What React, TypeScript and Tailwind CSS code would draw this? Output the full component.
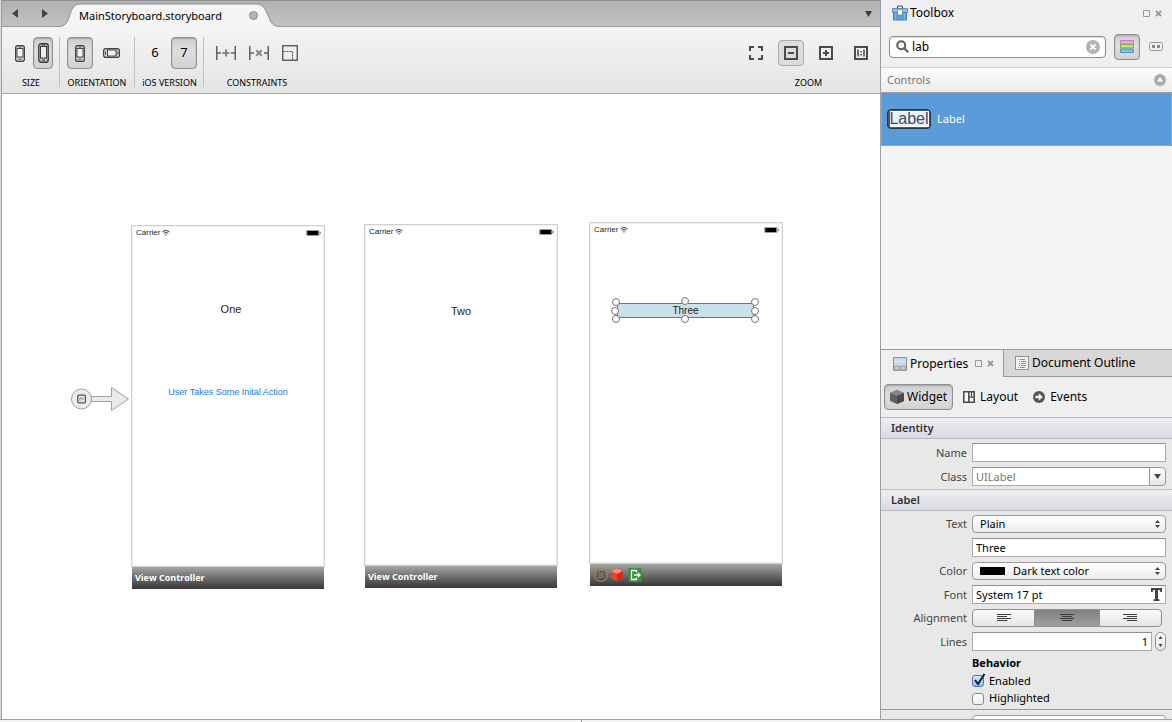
import React from "react";
import type { ReactNode } from "react";

const BTN_ON = "rounded border border-[#8f8f8f] bg-linear-to-b from-[#cfcfcf] via-[#dedede] to-[#d2d2d2] shadow-[inset_0_1px_2px_#0003]";
const FIELD = "h-[19px] min-w-0 flex-1 border border-[#ababab] border-t-[#8e8e8e] bg-white px-[3px] text-black outline-none";
const POPUP = "h-[18px] w-full appearance-none rounded border border-[#9a9a9a] bg-linear-to-b from-white to-[#ececec] text-black outline-none";

function Phone() {
  return (
    <svg width="10" height="17" viewBox="0 0 10 17" fill="none" stroke="#444">
      <rect x=".6" y=".6" width="8.800" height="15.800" rx="2.200" strokeWidth="1.200" fill="#cfcfcf" />
      <rect x="2" y="3.500" width="6" height="8.500" fill="#f4f4f4" />
      <path d="M3.500 2h3M3.500 14.300h3" strokeWidth=".9" />
    </svg>
  );
}

function TallPhone() {
  return (
    <svg width="11" height="20" viewBox="0 0 11 20" fill="none" stroke="#3a3a3a">
      <rect x=".75" y=".75" width="9.500" height="18.500" rx="2.200" strokeWidth="1.300" fill="#b8b8b8" />
      <rect x="2.500" y="3.500" width="6" height="11.500" fill="#eee" />
      <path d="M4 2h3M4.200 17.200h2.600" />
    </svg>
  );
}

function WidePhone() {
  return (
    <svg width="17" height="10" viewBox="0 0 17 10" fill="none" stroke="#444">
      <rect x=".6" y=".6" width="15.800" height="8.800" rx="2.200" strokeWidth="1.200" fill="#cfcfcf" />
      <rect x="4.500" y="2" width="8.500" height="6" fill="#f4f4f4" />
      <path d="M2.500 3.500v3M14.800 3.500v3" strokeWidth=".9" />
    </svg>
  );
}

function Group({ label, children, className = "" }: { label: string; children: ReactNode; className?: string }) {
  return (
    <div className={`flex flex-col items-center ${className}`}>
      <div className="flex h-8 w-full items-center justify-between">{children}</div>
      <span className="mt-2 text-[9px] leading-3 whitespace-nowrap text-black">{label}</span>
    </div>
  );
}

const Divider = () => <div className="h-[50px] w-px shrink-0 bg-[#c2c2c2]" />;

function Toolbar() {
  return (
    <div className="flex h-[67px] shrink-0 items-start border-b border-[#a3a3a3] bg-linear-to-b from-[#f4f4f4] to-[#e4e4e4] pt-[10px]">
      <Group label="SIZE" className="mr-[6px] ml-[7px] w-11">
        <button aria-label="3.5 inch" className="ml-[6px]"><Phone /></button>
        <button aria-label="4 inch" className={`flex h-8 w-5 items-center justify-center ${BTN_ON}`}><TallPhone /></button>
      </Group>
      <Divider />
      <Group label="ORIENTATION" className="mr-[7px] ml-[7px] w-[60px]">
        <button aria-label="Portrait" className={`flex h-8 w-[26px] items-center justify-center ${BTN_ON}`}><Phone /></button>
        <button aria-label="Landscape" className="mr-[7px]"><WidePhone /></button>
      </Group>
      <Divider />
      <Group label="iOS VERSION" className="mr-[6px] ml-[7px] w-[55px]">
        <button className="w-[26px] text-[13px] text-black">6</button>
        <button className={`h-8 w-[26px] text-[13px] text-black ${BTN_ON}`}>7</button>
      </Group>
      <Divider />
      <Group label="CONSTRAINTS" className="ml-3 w-[82px]">
        <button aria-label="Add constraints">
          <svg width="20" height="14" viewBox="0 0 20 14" fill="none" strokeWidth="1.500" stroke="#606060">
            <path d="M.75 0v14M19.250 0v14M1 7h4M15 7h4" />
            <path d="M6.500 7h7M10 3.500v7" stroke="#858585" strokeWidth="2" />
          </svg>
        </button>
        <button aria-label="Remove constraints">
          <svg width="20" height="14" viewBox="0 0 20 14" fill="none" strokeWidth="1.500" stroke="#606060">
            <path d="M.75 0v14M19.250 0v14M1 7h4M15 7h4" />
            <path d="M7.200 4.200l5.600 5.600M12.800 4.200L7.200 9.800" stroke="#858585" strokeWidth="2" />
          </svg>
        </button>
        <button aria-label="Frame mode">
          <svg width="16" height="16" viewBox="0 0 16 16" fill="none" stroke="#505050">
            <rect x=".75" y=".75" width="14.500" height="14.500" strokeWidth="1.300" />
            <path d="M1.500 6.500h9V15" strokeDasharray="2 1" strokeWidth="1.100" />
          </svg>
        </button>
      </Group>
      <Group label="ZOOM" className="mr-3 ml-auto w-[119px]">
        <button aria-label="Fit">
          <svg width="14" height="14" viewBox="0 0 14 14" fill="none" stroke="#4a4a4a" strokeWidth="2">
            <path d="M1 5V1h4M9 1h4v4M13 9v4H9M5 13H1V9" />
          </svg>
        </button>
        <button aria-label="Zoom out" className="-mr-[6px] -ml-[6px] flex h-[26px] w-[26px] items-center justify-center rounded-sm border border-[#aaa] bg-[#dcdcdc]">
          <svg width="14" height="14" viewBox="0 0 14 14" fill="none" stroke="#4a4a4a" strokeWidth="2">
            <path d="M1 1h12v12H1zM4 7h6" />
          </svg>
        </button>
        <button aria-label="Zoom in">
          <svg width="14" height="14" viewBox="0 0 14 14" fill="none" stroke="#4a4a4a" strokeWidth="2">
            <path d="M1 1h12v12H1zM4 7h6M7 4v6" />
          </svg>
        </button>
        <button aria-label="Actual size">
          <svg width="14" height="14" viewBox="0 0 14 14" fill="none" stroke="#4a4a4a" strokeWidth="2">
            <path d="M1 1h12v12H1z" />
            <path d="M4 3.500v7M10 3.500v7M7 5v1.500M7 8v1.500" strokeWidth="1.500" />
          </svg>
        </button>
      </Group>
    </div>
  );
}

function TabStrip() {
  return (
    <div className="flex h-[27px] shrink-0 items-stretch border-t border-b border-t-[#8f8f8f] border-b-[#999] bg-linear-to-b from-[#b2b2b2] to-[#c1c1c1]">
      <div className="flex w-[56px] items-center justify-between pr-[10px] pl-[10px]">
        <button aria-label="Back"><svg width="6" height="9" viewBox="0 0 6 9"><path d="M6 0v9L0 4.500z" fill="#444" /></svg></button>
        <button aria-label="Forward"><svg width="6" height="9" viewBox="0 0 6 9"><path d="M0 0v9l6-4.500z" fill="#444" /></svg></button>
      </div>
      <div className="relative -mb-px flex w-[222px] items-center">
        <svg className="absolute inset-0 h-full w-full" viewBox="0 0 222 26" preserveAspectRatio="none">
          <path d="M0 25.500C7 25.500 9 22 11 16.500C13 10 15 3 22 3H199C206 3 208 10 211 16.500C213 22 215 25.500 222 25.500V26H0Z" fill="#f5f5f5" />
          <path d="M0 25.500C7 25.500 9 22 11 16.500C13 10 15 3 22 3H199C206 3 208 10 211 16.500C213 22 215 25.500 222 25.500" fill="none" stroke="#8a8a8a" />
        </svg>
        <span className="relative mt-[3px] ml-[21px] text-[11px] leading-4 text-black">MainStoryboard.storyboard</span>
        <span className="absolute top-[10px] right-[22px] h-[9px] w-[9px] rounded-full border border-[#8a8a8a] bg-[#b4b4b4]" />
      </div>
      <button aria-label="Open documents" className="mr-2 ml-auto"><svg width="7" height="6" viewBox="0 0 7 6"><path d="M0 0h7L3.500 6z" fill="#3a3a3a" /></svg></button>
    </div>
  );
}

function Screen({ className, footer, children }: { className: string; footer: ReactNode; children: ReactNode }) {
  return (
    <section className={`absolute w-[194px] ${className}`}>
      <div className="relative h-[342px] border border-[#d2d2d2] bg-white font-['Liberation_Sans',sans-serif] text-[#222] ring-1 ring-[#f0f0f0] ring-inset">
        <div className="flex items-center px-1 pt-[2px] text-[8px] leading-[10px]">
          <span>Carrier</span>
          <svg className="ml-[2px]" width="8" height="6" viewBox="0 0 8 6" fill="none" stroke="#333">
            <path d="M.4 2C2.500 .1 5.500 .1 7.600 2M1.700 3.500C3 2.300 5 2.300 6.300 3.500" />
            <path d="M4 5.800L2.800 4.500h2.400z" fill="#333" stroke="none" />
          </svg>
          <svg className="-mr-px ml-auto" width="15" height="6" viewBox="0 0 15 6">
            <rect x=".4" y=".4" width="12.700" height="5.200" rx="1" fill="#fff" stroke="#666" strokeWidth=".7" />
            <rect x="1.200" y="1" width="11.200" height="4" rx=".5" fill="#000" />
            <path d="M13.800 2q1 .2 1 1t-1 1z" fill="#555" />
          </svg>
        </div>
        {children}
      </div>
      <div className="mx-px flex h-[22px] items-center bg-linear-to-b from-[#a6a6a6] to-[#383838] px-[3px] font-['Open_Sans','Noto_Sans',sans-serif] text-[9px] font-bold text-white">{footer}</div>
    </section>
  );
}

const HANDLES = [
  "left-0 top-0", "left-[69px] -top-px", "left-[139px] top-0",
  "-left-px top-[9px]", "left-[139px] top-[9px]",
  "left-0 top-[17px]", "left-[69px] top-[17px]", "left-[139px] top-[17px]",
];

function Canvas() {
  return (
    <main className="relative min-h-0 flex-1 overflow-hidden bg-white">
      <svg className="absolute top-[292px] left-[69px]" width="60" height="26" viewBox="0 0 60 26" fill="#ebebeb" stroke="#a0a0a0">
        <path d="M20 10.500h20.500V1.500L57.500 13 40.500 24.500V15.500H20z" />
        <circle cx="10.500" cy="13" r="10" />
        <rect x="6.800" y="9.200" width="7.600" height="7.600" rx="1" stroke="#555" strokeWidth="1.300" />
        <path d="M9 15v-3.500l3 2v-2" fill="none" stroke="#777" strokeWidth=".8" />
      </svg>
      <Screen className="top-[131px] left-[129px]" footer="View Controller">
        <span className="absolute inset-x-0 top-[75px] pl-1.5 text-center text-[11px] leading-4">One</span>
        <span className="absolute inset-x-0 top-[158px] text-center text-[9px] leading-4 whitespace-nowrap text-[#1479f5]">User Takes Some Inital Action</span>
      </Screen>
      <Screen className="top-[130px] left-[362px]" footer="View Controller">
        <span className="absolute inset-x-0 top-[78px] text-center text-[11px] leading-4">Two</span>
      </Screen>
      <Screen
        className="top-[128px] left-[587px]"
        footer={
          <svg width="50" height="16" viewBox="0 0 50 16" fill="none">
            <circle cx="8" cy="8" r="6.500" stroke="#a8823f" strokeWidth="1.200" />
            <rect x="4.500" y="4.500" width="7" height="7" fill="#707070" stroke="#444" strokeDasharray="1.500 1" />
            <path d="M24 1.500l6 2.500v7l-6 3.500-6-3.500V4z" fill="#e8412f" />
            <path d="M24 1.500l6 2.500-6 3-6-3z" fill="#ff8b7c" />
            <path d="M24 7l6-3v7l-6 3.500z" fill="#d52c1c" />
            <rect x="35.500" y="1" width="13" height="14" rx="1" fill="#35913a" />
            <path d="M43.500 5.500v-2H38.500v9h5v-2M41 8h6M45 6l2 2-2 2" stroke="#fff" strokeWidth="1.300" />
          </svg>
        }
      >
        <div className="absolute top-[75px] left-[22px] h-[26px] w-[148px]">
          <div className="mt-[5px] ml-[5px] flex h-[15px] w-[137px] items-center justify-center border border-[#2d88ae] bg-[#cbe1ea] text-[10px]">Three</div>
          {HANDLES.map((h) => (
            <span key={h} className={`absolute h-2 w-2 rounded-full border border-[#777] bg-white ${h}`} />
          ))}
        </div>
      </Screen>
    </main>
  );
}

function PanelButtons() {
  return (
    <span className="flex items-center gap-[5px]">
      <button aria-label="Minimize"><svg width="7" height="7" viewBox="0 0 7 7"><path d="M.5 .5h6v6h-6z" fill="none" stroke="#999" /></svg></button>
      <button aria-label="Close"><svg width="7" height="7" viewBox="0 0 7 7"><path d="M1 1l5 5M6 1L1 6" stroke="#999" strokeWidth="1.800" /></svg></button>
    </span>
  );
}

function Toolbox() {
  return (
    <section className="flex min-h-0 flex-1 flex-col bg-[#f5f5f5]">
      <div className="bg-[#efefef]">
        <header className="flex h-[26px] items-center pr-[10px] pl-[11px]">
          <svg width="16" height="16" viewBox="0 0 16 16">
            <path d="M5.500 4V2Q5.500 1 6.500 1h3Q10.500 1 10.500 2v2" fill="none" stroke="#555" strokeWidth="1.200" />
            <path d="M.5 3.500h15v4h-15z" fill="#8ebfe4" stroke="#5b93bf" />
            <path d="M1.500 7.500h13v7.500h-13z" fill="#5f9fd2" stroke="#4781b0" />
            <path d="M3.500 8v6.500M12.500 8v6.500" stroke="#86b9e0" />
            <path d="M5.500 4.500h5V10h-5z" fill="#f7f3df" stroke="#4781b0" strokeWidth=".6" />
          </svg>
          <h2 className="ml-[2px] flex-1 text-[12px] text-black">Toolbox</h2>
          <PanelButtons />
        </header>
        <div className="flex h-[41px] items-center pr-[9px] pl-2">
          <label className="flex h-[22px] min-w-0 flex-1 items-center rounded border border-[#8d8d8d] bg-white pr-[5px] pl-[6px] shadow-[inset_0_1px_1px_#0002]">
            <svg width="13" height="13" viewBox="0 0 13 13" fill="none" stroke="#5c5c5c" strokeWidth="2"><circle cx="5.200" cy="5.200" r="4" /><path d="M8.200 8.200l4 4" /></svg>
            <input aria-label="Search toolbox" defaultValue="lab" className="ml-[3px] min-w-0 flex-1 bg-transparent text-[12px] text-black outline-none" />
            <svg width="14" height="14" viewBox="0 0 14 14"><circle cx="7" cy="7" r="7" fill="#b2b2b2" /><path d="M4.300 4.300l5.400 5.400M9.700 4.300L4.300 9.700" stroke="#fff" strokeWidth="1.800" /></svg>
          </label>
          <button aria-label="Show categories" className={`ml-2 flex h-[26px] w-[26px] items-center justify-center ${BTN_ON}`}>
            <svg width="14" height="13" viewBox="0 0 14 13">
              <path d="M.5 .5h13v3.500H.5z" fill="#f5a0e8" stroke="#c97fbd" />
              <path d="M.5 4.500h13V8H.5z" fill="#b8e86c" stroke="#86ad4b" />
              <path d="M.5 9h13v3.500H.5z" fill="#7cc4f0" stroke="#5690b8" />
            </svg>
          </button>
          <button aria-label="Compact mode" className="ml-[9px]">
            <svg width="14" height="9" viewBox="0 0 14 9"><rect x=".5" y=".5" width="13" height="8" rx="1" fill="#eee" stroke="#999" /><path d="M3 3h3v3H3zM8 3h3v3H8z" fill="#8a8a8a" /></svg>
          </button>
        </div>
      </div>
      <div className="flex h-[25px] items-center justify-between border-t border-[#d0d0d0] bg-linear-to-b from-[#fcfcfc] to-[#ececec] pr-[6px] pl-[6px] text-[11px] text-[#777]">
        Controls
        <button aria-label="Collapse"><svg width="12" height="12" viewBox="0 0 12 12"><circle cx="6" cy="6" r="6" fill="#aaa" /><path d="M6 3l3 4.500H3z" fill="#fff" /></svg></button>
      </div>
      <button className="flex h-[54px] items-center border border-[#a29f9f] bg-[#5b9bd9] pl-[5px] text-[11px] text-white">
        <span className="flex h-5 w-11 items-center justify-center rounded-sm border border-[#20394f] bg-[#3d5c7a]">
          <span className="flex h-4 w-[39px] items-center justify-center border border-white bg-[#eef1f4] font-['Liberation_Sans',sans-serif] text-[16px] leading-none text-[#344f69]">Label</span>
        </span>
        <span className="ml-[6px]">Label</span>
      </button>
    </section>
  );
}

function Row({ label, id, children }: { label: string; id?: string; children: ReactNode }) {
  return (
    <div className="flex items-center">
      <label htmlFor={id} className="mr-[5px] w-[86px] shrink-0 text-right leading-[18px]">{label}</label>
      {children}
    </div>
  );
}

const UpDown = ({ className = "" }: { className?: string }) => (
  <svg className={className} width="5" height="8" viewBox="0 0 5 8"><path d="M0 3l2.500-3L5 3zM0 5l2.500 3L5 5z" fill="#444" /></svg>
);

const Heading = ({ children }: { children: ReactNode }) => (
  <h3 className="flex h-[22px] items-center border-y border-[#b9b9bd] bg-linear-to-b from-[#eeeef2] to-[#d9d9e4] pl-[10px] text-[11px] font-semibold text-[#333]">{children}</h3>
);

const ALIGNMENTS = [
  { name: "Left", d: "M0 .5h14M0 2.500h10M0 4.500h14M0 6.500h10", cls: "rounded-l border bg-linear-to-b from-[#fafafa] to-[#e6e6e6]" },
  { name: "Center", d: "M0 .5h14M2 2.500h10M0 4.500h14M2 6.500h10", cls: "border-y bg-linear-to-b from-[#808080] to-[#a0a0a0]" },
  { name: "Right", d: "M0 .5h14M4 2.500h10M0 4.500h14M4 6.500h10", cls: "rounded-r border bg-linear-to-b from-[#fafafa] to-[#e6e6e6]" },
];

function Properties() {
  return (
    <section className="flex h-[370px] shrink-0 flex-col overflow-hidden border-t border-[#999] bg-[#e8e8e8] text-[11px] text-[#444]">
      <div className="flex h-[27px] shrink-0 text-[12px] text-black">
        <div className="flex w-[122px] items-center bg-[#efefef] pl-3">
          <svg width="14" height="14" viewBox="0 0 14 14"><path d="M.5 .5h13v13H.5z" fill="#e4e8ea" stroke="#8f8f8f" /><path d="M1 1h12v3H1z" fill="#c5dbe9" /><path d="M1 5h12v3H1z" fill="#c5dbe9" /><path d="M1 8.500h12v5H1z" fill="#aaa" /><path d="M2 11h4M8 11h4" stroke="#eee" /></svg>
          <span className="mr-[7px] ml-[3px]">Properties</span>
          <PanelButtons />
        </div>
        <button className="flex flex-1 items-center border-b border-l border-[#999] bg-[#d8d8d8] pl-[11px]">
          <svg width="14" height="14" viewBox="0 0 14 14"><rect x=".5" y=".5" width="13" height="13" fill="#f3f3f3" stroke="#8f8f8f" /><path d="M3 3.500h1M5 3.500h5M4 5.500h1M6 5.500h5M4 7.500h1M6 7.500h5M4 9.500h1M6 9.500h5M3 11.500h1M5 11.500h5" stroke="#8c8c8c" /></svg>
          <span className="ml-[3px]">Document Outline</span>
        </button>
      </div>
      <div className="flex h-[40px] shrink-0 items-center gap-[10px] bg-[#efefef] pl-[3px] text-[12px] text-black">
        <button className={`flex h-[26px] w-[69px] items-center gap-[3px] pl-[5px] ${BTN_ON}`}>
          <svg width="14" height="14" viewBox="0 0 14 14"><path d="M7 0l7 3v8l-7 3-7-3V3z" fill="#606060" /><path d="M7 0l7 3-7 3-7-3z" fill="#858585" /><path d="M7 6l7-3v8l-7 3z" fill="#4a4a4a" /></svg>
          Widget
        </button>
        <button className="flex items-center gap-[5px]">
          <svg width="12" height="12" viewBox="0 0 12 12" fill="#fafafa" stroke="#4c4c4c" strokeWidth="1.600"><path d="M.8 .8h5v10.400h-5zM5.800 .8h5.400v10.400H5.800z" /><path d="M8.500 1v5M6 6.200h5" strokeWidth="1.200" /></svg>
          Layout
        </button>
        <button className="ml-[5px] flex items-center gap-[5px]">
          <svg width="12" height="12" viewBox="0 0 12 12"><circle cx="6" cy="6" r="6" fill="#555" /><path d="M2.500 4.700h3.300V2.300L9.900 6 5.800 9.700V7.300H2.500z" fill="#f4f4f4" /></svg>
          Events
        </button>
      </div>
      <Heading>Identity</Heading>
      <div className="flex flex-col gap-[5px] pt-1 pr-[6px] pb-[3px]">
        <Row label="Name" id="name"><input id="name" className={FIELD} /></Row>
        <Row label="Class" id="class">
          <input id="class" placeholder="UILabel" className={`${FIELD} placeholder:text-[#777]`} />
          <button aria-label="Choose class" className="-ml-px flex h-[19px] w-[17px] items-center justify-center rounded-r border border-[#999] bg-linear-to-b from-white to-[#e6e6e6]">
            <svg width="7" height="5" viewBox="0 0 7 5"><path d="M0 0h7L3.500 5z" fill="#444" /></svg>
          </button>
        </Row>
      </div>
      <Heading>Label</Heading>
      <div className="flex flex-col gap-[5px] pt-1 pr-[6px]">
        <Row label="Text" id="text">
          <div className="relative flex flex-1">
            <select id="text" className={`${POPUP} pl-[7px]`}><option>Plain</option></select>
            <UpDown className="pointer-events-none absolute top-[5px] right-[6px]" />
          </div>
        </Row>
        <Row label=""><input aria-label="Text value" defaultValue="Three" className={FIELD} /></Row>
        <Row label="Color" id="color">
          <div className="relative flex flex-1">
            <select id="color" className={`${POPUP} pl-10`}><option>Dark text color</option></select>
            <span className="pointer-events-none absolute top-[5px] left-2 h-2 w-[25px] bg-black" />
            <UpDown className="pointer-events-none absolute top-[5px] right-[6px]" />
          </div>
        </Row>
        <Row label="Font" id="font">
          <div className="relative flex flex-1">
            <input id="font" defaultValue="System 17 pt" className={FIELD} />
            <button aria-label="Choose font" className="absolute top-[3px] right-[4px]">
              <svg width="11" height="13" viewBox="0 0 11 13"><path d="M0 0h11v4H9.500L8.500 2H7v9l1.500.500V13h-6v-1.500L4 11V2H2.500l-1 2H0z" fill="#444" /></svg>
            </button>
          </div>
        </Row>
        <Row label="Alignment">
          <div role="group" aria-label="Alignment" className="mr-[4px] grid h-[18px] flex-1 grid-cols-3">
            {ALIGNMENTS.map((a) => (
              <button key={a.name} aria-label={a.name} className={`flex items-center justify-center border-[#8f8f8f] ${a.cls}`}>
                <svg width="14" height="8" viewBox="0 0 14 8"><path d={a.d} stroke="#3c3c3c" /></svg>
              </button>
            ))}
          </div>
        </Row>
        <Row label="Lines" id="lines">
          <input id="lines" defaultValue="1" className={`${FIELD} text-right`} />
          <button aria-label="Step lines" className="ml-[3px] flex h-[19px] w-[11px] items-center justify-center rounded-full border border-[#8f8f8f] bg-linear-to-b from-white to-[#e6e6e6]">
            <svg width="5" height="11" viewBox="0 0 5 11"><path d="M.5 3l2-3 2 3zM.5 8l2 3 2-3z" fill="#444" /></svg>
          </button>
        </Row>
      </div>
      <div className="flex h-[58px] shrink-0 flex-col pt-[3px] pl-[91px] text-black">
        <h4 className="leading-[18px] font-bold">Behavior</h4>
        <label className="flex h-[18px] items-center gap-[5px]">
          <span className="relative flex">
            <input type="checkbox" defaultChecked className="peer h-3 w-3 appearance-none rounded-[3px] border border-[#8a8a8a] bg-linear-to-b from-white to-[#eee] checked:border-[#5a6f9f] checked:from-[#d5e8fb] checked:to-[#8fc6f5]" />
            <svg className="pointer-events-none absolute -top-[2px] left-px" width="13" height="13" viewBox="0 0 13 13" fill="none"><path d="M2 7l3 4L11.500 1" stroke="#111c33" strokeWidth="2" /></svg>
          </span>
          Enabled
        </label>
        <label className="flex h-[17px] items-center gap-[5px]">
          <input type="checkbox" className="h-3 w-3 appearance-none rounded-[3px] border border-[#8a8a8a] bg-linear-to-b from-white to-[#eee]" />
          Highlighted
        </label>
      </div>
      <div className="min-h-0 flex-1 border-t border-[#999] pt-[5px] pr-[6px] pl-[91px]">
        <select aria-label="Baseline" className={`${POPUP} pl-[7px]`} />
      </div>
    </section>
  );
}

export default function App() {
  return (
    <div className="flex h-screen w-full flex-col overflow-hidden bg-[#f5f5f4] font-['Noto_Sans','Open_Sans',sans-serif]">
      <div className="flex min-h-0 flex-1 border-b border-[#a0a0a0]">
        <div className="w-[2px] shrink-0 border-r border-[#969da5] bg-[#d8dfe8]" />
        <div className="flex min-w-0 flex-1 flex-col">
          <TabStrip />
          <Toolbar />
          <Canvas />
        </div>
        <aside className="flex w-[292px] shrink-0 flex-col border-l border-[#9aa0a6]">
          <Toolbox />
          <Properties />
        </aside>
      </div>
      <div className="flex h-[2px] shrink-0"><div className="w-[582px] border-r border-[#999]" /></div>
    </div>
  );
}
